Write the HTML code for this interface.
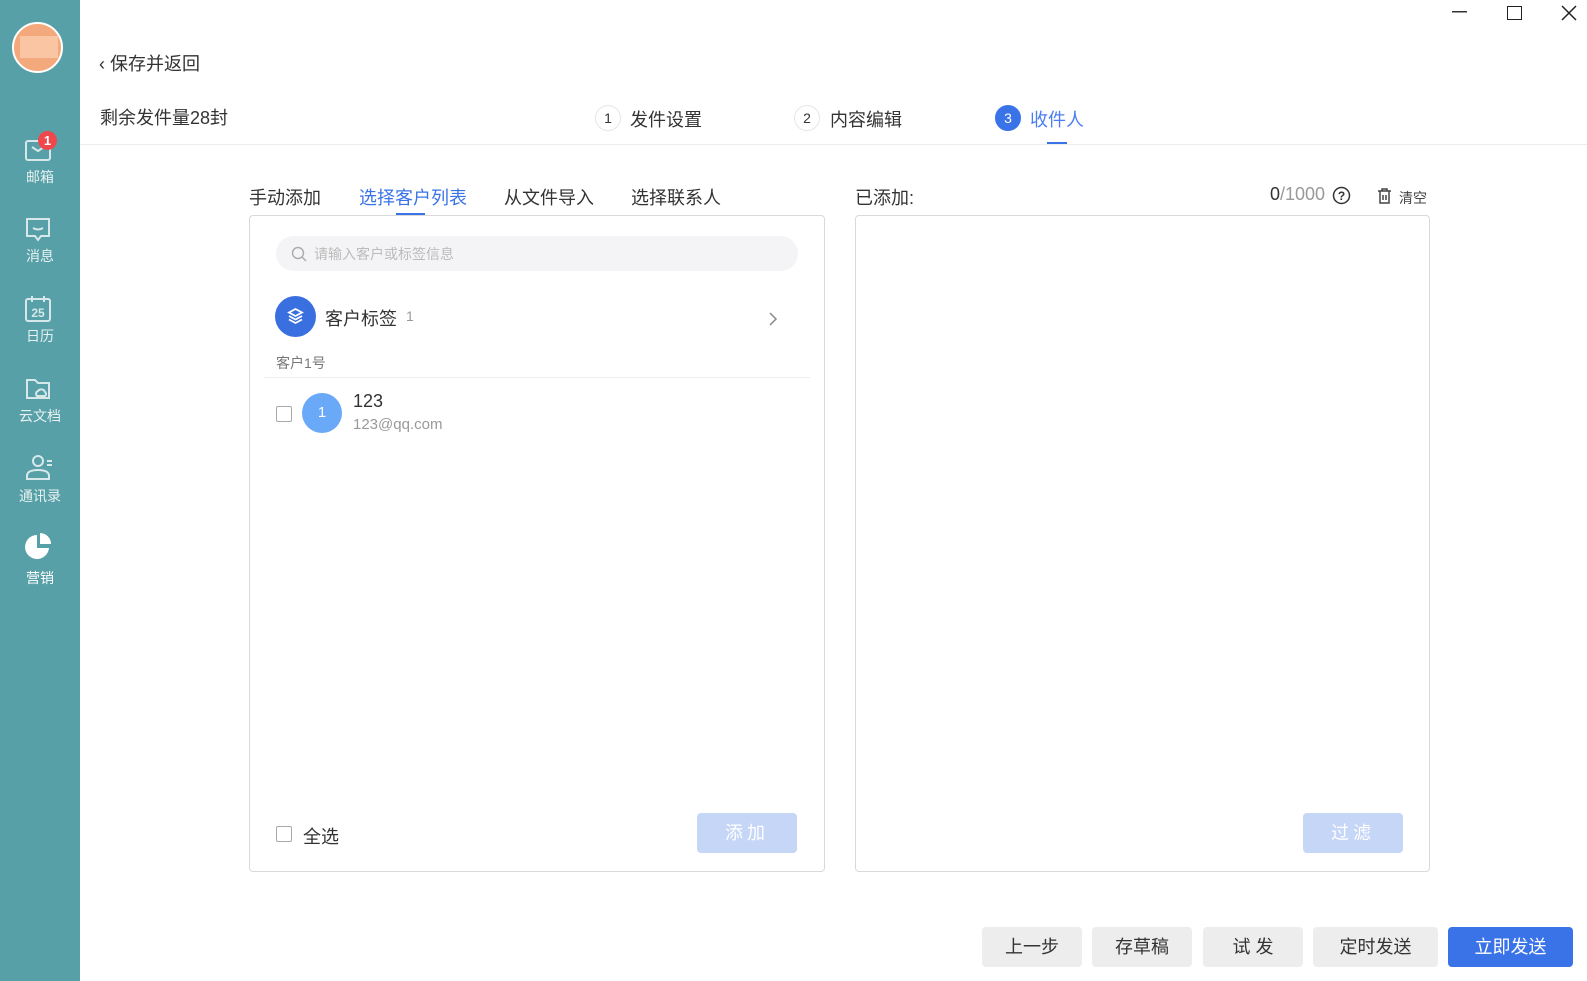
<!DOCTYPE html>
<html><head><meta charset="utf-8"><style>
*{margin:0;padding:0;box-sizing:border-box}
body{width:1587px;height:981px;position:relative;background:#fff;font-family:"Liberation Sans","Noto Sans CJK SC",sans-serif;color:#333;overflow:hidden}
.a{position:absolute;white-space:nowrap}
#side{position:absolute;left:0;top:0;width:80px;height:981px;background:#58a0a7}
.lab{position:absolute;width:80px;text-align:center;color:#e6f1f2;font-size:14px}
.ic{position:absolute;left:24px}
.step{position:absolute;width:26px;height:26px;border-radius:50%;border:1px solid #e6e6e6;text-align:center;line-height:24px;font-size:14px;color:#333}
.panel{position:absolute;top:215px;height:657px;border:1px solid #d9d9d9;border-radius:4px}
.btn{position:absolute;top:927px;height:40px;background:#ededed;border-radius:4px;text-align:center;line-height:40px;font-size:18px;color:#333}
.cb{position:absolute;width:16px;height:16px;border:1px solid #aaa;border-radius:2px;background:#fff}
</style></head><body>
<div id="side">
 <div class="a" style="left:12px;top:22px;width:51px;height:51px;border-radius:50%;background:#f3a97c;border:2px solid #fff;overflow:hidden"><div style="position:absolute;left:6px;top:12px;width:38px;height:22px;background:#f9c5a2"></div></div>
 <svg class="ic" style="top:137px" width="30" height="26" viewBox="0 0 30 26"><rect x="2" y="4" width="24" height="19" rx="2" fill="none" stroke="#d6e8ea" stroke-width="2"/><path d="M8 10l6 4 6-4" fill="none" stroke="#d6e8ea" stroke-width="2"/></svg>
 <div class="a" style="left:38px;top:131px;width:19px;height:19px;border-radius:50%;background:#f0474c;color:#fff;font-size:13px;text-align:center;line-height:19px;font-weight:bold">1</div>
 <div class="lab" style="top:167px">邮箱</div>
 <svg class="ic" style="top:216px" width="30" height="28" viewBox="0 0 30 28"><path d="M3 3h22v17H17l-3 4-3-4H3z" fill="none" stroke="#d6e8ea" stroke-width="2"/><path d="M9 12q5 3 10 0" fill="none" stroke="#d6e8ea" stroke-width="2"/></svg>
 <div class="lab" style="top:246px">消息</div>
 <svg class="ic" style="top:294px" width="30" height="30" viewBox="0 0 30 30"><rect x="2" y="5" width="24" height="22" rx="2" fill="none" stroke="#d6e8ea" stroke-width="2"/><path d="M8 2v6M20 2v6" stroke="#d6e8ea" stroke-width="2"/><text x="14" y="23" text-anchor="middle" font-size="12" font-weight="bold" fill="#d6e8ea" font-family="Liberation Sans">25</text></svg>
 <div class="lab" style="top:326px">日历</div>
 <svg class="ic" style="top:375px" width="30" height="28" viewBox="0 0 30 28"><path d="M3 5h8l3 3h11v15H3z" fill="none" stroke="#d6e8ea" stroke-width="2"/><path d="M13 21a3 3 0 0 1 1-5a4 4 0 0 1 7 1a2.5 2.5 0 0 1 0 4z" fill="none" stroke="#d6e8ea" stroke-width="2"/></svg>
 <div class="lab" style="top:406px">云文档</div>
 <svg class="ic" style="top:453px" width="32" height="30" viewBox="0 0 32 30"><circle cx="14" cy="8" r="5" fill="none" stroke="#d6e8ea" stroke-width="2"/><path d="M3 26v-3q0-6 11-6t11 6v3z" fill="none" stroke="#d6e8ea" stroke-width="2"/><path d="M23 8h5M23 12h5" stroke="#d6e8ea" stroke-width="2"/></svg>
 <div class="lab" style="top:486px">通讯录</div>
 <svg class="ic" style="top:533px" width="30" height="28" viewBox="0 0 30 28"><path d="M13 2a12 12 0 1 0 12 13H13z" fill="#fff"/><path d="M16 0a11 11 0 0 1 11 11H16z" fill="#fff"/></svg>
 <div class="lab" style="top:568px;color:#fff">营销</div>
</div>
<svg class="a" style="left:1452px;top:11px" width="16" height="3"><rect width="15" height="1.5" fill="#333"/></svg>
<div class="a" style="left:1507px;top:6px;width:15px;height:14px;border:1.5px solid #222"></div>
<svg class="a" style="left:1561px;top:5px" width="16" height="16" viewBox="0 0 16 16"><path d="M1 1l14 14M15 1L1 15" stroke="#222" stroke-width="1.5"/></svg>

<div class="a" style="left:99px;top:50px;font-size:18px;color:#333">‹ 保存并返回</div>
<div class="a" style="left:100px;top:104px;font-size:18px">剩余发件量28封</div>
<div class="step" style="left:595px;top:105px">1</div><div class="a" style="left:630px;top:106px;font-size:18px">发件设置</div>
<div class="step" style="left:794px;top:105px">2</div><div class="a" style="left:830px;top:106px;font-size:18px">内容编辑</div>
<div class="step" style="left:995px;top:105px;background:#3a73e8;border-color:#3a73e8;color:#fff">3</div><div class="a" style="left:1030px;top:106px;font-size:18px;color:#4a7df0">收件人</div>
<div class="a" style="left:1047px;top:142px;width:20px;height:3px;background:#3a73e8"></div>
<div class="a" style="left:80px;top:144px;width:1507px;height:1px;background:#ececec"></div>

<div class="a" style="left:249px;top:184px;font-size:18px">手动添加</div>
<div class="a" style="left:359px;top:184px;font-size:18px;color:#3a73e8">选择客户列表</div>
<div class="a" style="left:396px;top:213px;width:29px;height:3px;background:#3a73e8"></div>
<div class="a" style="left:504px;top:184px;font-size:18px">从文件导入</div>
<div class="a" style="left:631px;top:184px;font-size:18px">选择联系人</div>

<div class="panel" style="left:249px;width:576px"></div>
<div class="a" style="left:276px;top:236px;width:522px;height:35px;border-radius:18px;background:#f4f4f6"></div>
<svg class="a" style="left:291px;top:246px" width="16" height="16" viewBox="0 0 16 16"><circle cx="7" cy="7" r="5.5" fill="none" stroke="#aaa" stroke-width="1.4"/><path d="M11 11l4 4" stroke="#aaa" stroke-width="1.4"/></svg>
<div class="a" style="left:314px;top:244px;font-size:14px;color:#bbb">请输入客户或标签信息</div>
<div class="a" style="left:275px;top:296px;width:41px;height:41px;border-radius:50%;background:#3a6fe0"></div>
<svg class="a" style="left:285px;top:306px" width="21" height="21" viewBox="0 0 21 21"><path d="M10.5 3L17 6.5 10.5 10 4 6.5z" fill="none" stroke="#fff" stroke-width="1.8"/><path d="M4 10l6.5 3.5L17 10M4 13.5l6.5 3.5 6.5-3.5" fill="none" stroke="#fff" stroke-width="1.8"/></svg>
<div class="a" style="left:325px;top:305px;font-size:18px">客户标签</div>
<div class="a" style="left:406px;top:308px;font-size:14px;color:#999">1</div>
<svg class="a" style="left:768px;top:311px" width="10" height="16"><path d="M2 2l6 6-6 6" fill="none" stroke="#888" stroke-width="1.5"/></svg>
<div class="a" style="left:276px;top:353px;font-size:14px;color:#777">客户1号</div>
<div class="a" style="left:264px;top:377px;width:546px;height:1px;background:#eee"></div>
<div class="cb" style="left:276px;top:406px"></div>
<div class="a" style="left:302px;top:393px;width:40px;height:40px;border-radius:50%;background:#6aa8f8;color:#fff;text-align:center;line-height:40px;font-size:15px">1</div>
<div class="a" style="left:353px;top:391px;font-size:18px;color:#333">123</div>
<div class="a" style="left:353px;top:416px;font-size:15px;color:#999">123@qq.com</div>
<div class="cb" style="left:276px;top:826px"></div>
<div class="a" style="left:303px;top:823px;font-size:18px">全选</div>
<div class="a" style="left:697px;top:813px;width:100px;height:40px;border-radius:4px;background:#c5d6f7;color:#fff;font-size:18px;text-align:center;line-height:40px;letter-spacing:4px">添加</div>

<div class="a" style="left:855px;top:184px;font-size:18px">已添加:</div>
<div class="a" style="left:1270px;top:184px;font-size:18px;color:#999"><span style="color:#333">0</span>/1000</div>
<svg class="a" style="left:1332px;top:186px" width="19" height="19" viewBox="0 0 19 19"><circle cx="9.5" cy="9.5" r="8" fill="none" stroke="#333" stroke-width="1.5"/><text x="9.5" y="14" text-anchor="middle" font-size="12" font-weight="bold" fill="#333" font-family="Liberation Sans">?</text></svg>
<svg class="a" style="left:1377px;top:188px" width="15" height="16" viewBox="0 0 15 16"><path d="M1 3h13M5 3V1h5v2M3 3v12h9V3M6 7v5M9 7v5" fill="none" stroke="#444" stroke-width="1.5"/></svg>
<div class="a" style="left:1399px;top:188px;font-size:14px;color:#444">清空</div>
<div class="panel" style="left:855px;width:575px"></div>
<div class="a" style="left:1303px;top:813px;width:100px;height:40px;border-radius:4px;background:#c5d6f7;color:#fff;font-size:18px;text-align:center;line-height:40px;letter-spacing:4px">过滤</div>

<div class="btn" style="left:982px;width:100px">上一步</div>
<div class="btn" style="left:1092px;width:100px">存草稿</div>
<div class="btn" style="left:1203px;width:100px">试 发</div>
<div class="btn" style="left:1313px;width:125px">定时发送</div>
<div class="btn" style="left:1448px;width:125px;background:#3a73e8;color:#fff">立即发送</div>
</body></html>
